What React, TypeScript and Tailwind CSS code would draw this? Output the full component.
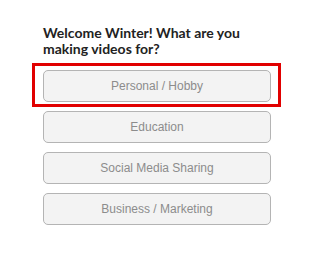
import React from "react";

const options = ["Personal / Hobby", "Education", "Social Media Sharing", "Business / Marketing"];

export default function App() {
  return (
    <div className="w-[320px] h-[266px] bg-white pl-[43px] pt-[25px]">
      <h1
        className="text-[14px] leading-[16px] font-bold text-[#222] w-[220px]"
        style={{ fontFamily: "Lato, 'Noto Sans', sans-serif" }}
      >
        Welcome Winter! What are you making videos for?
      </h1>
      <div className="mt-[13px] flex flex-col gap-[9px] w-[228px]">
        {options.map((o, i) => (
          <div key={o} className="relative">
            {i === 0 && (
              <span className="absolute -left-[11px] -right-[10px] -top-[7px] -bottom-[5px] border-[3px] border-[#e10000] pointer-events-none" />
            )}
            <button
              className="w-full h-[32px] rounded-[5px] border border-[#b4b4b4] bg-[#f3f3f3] text-[12px] text-[#8c8c8c] flex items-center justify-center"
              style={{ fontFamily: "'Liberation Sans', Arial, sans-serif" }}
            >
              {o}
            </button>
          </div>
        ))}
      </div>
    </div>
  );
}
